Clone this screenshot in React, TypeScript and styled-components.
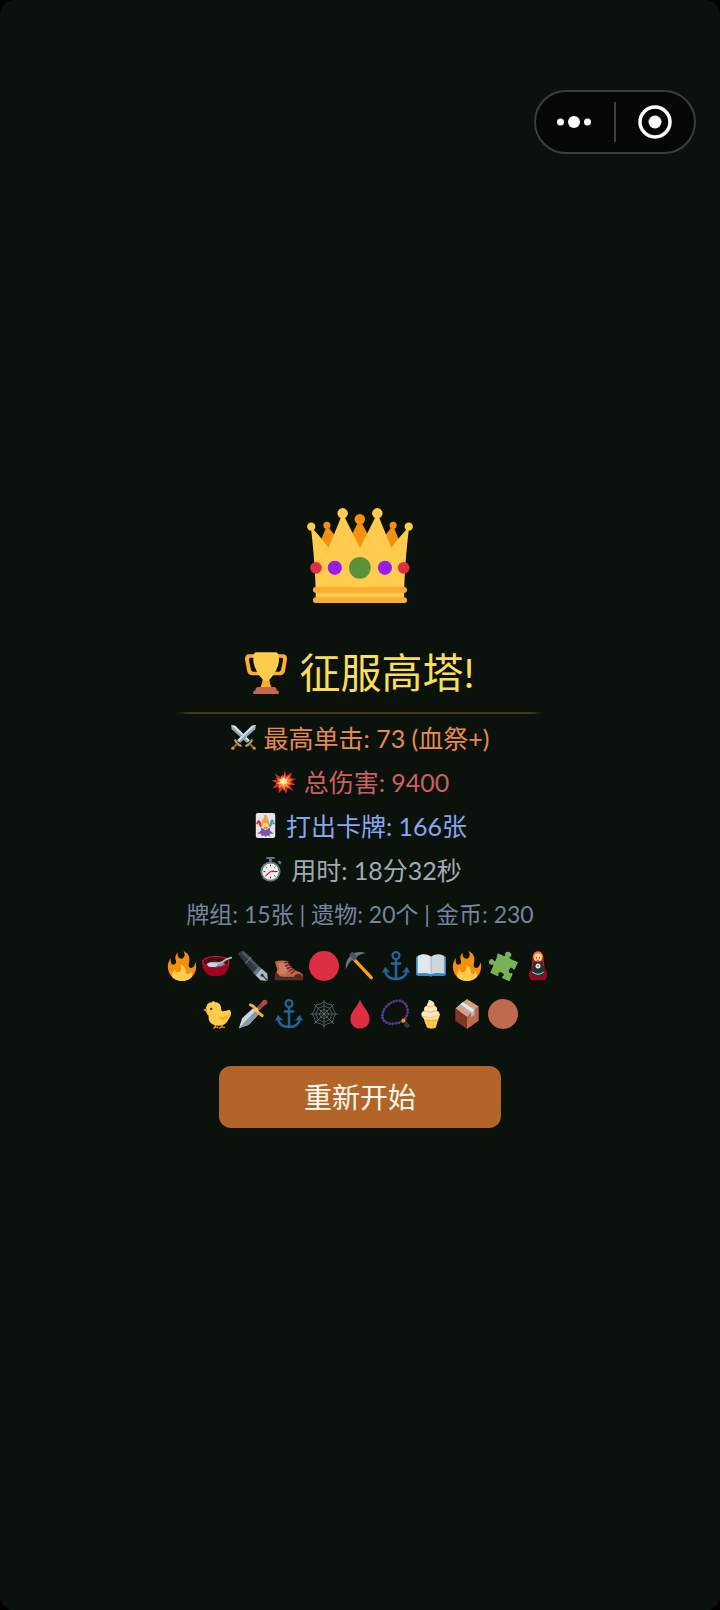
import React from 'react';
import styled, { createGlobalStyle } from 'styled-components';

const GlobalStyle = createGlobalStyle`
  *, *::before, *::after { box-sizing: border-box; }
  body {
    margin: 0;
    background: #000;
    font-family: Lato, "Noto Sans CJK SC", sans-serif;
  }
`;

const Screen = styled.div`
  position: relative;
  min-height: 100vh;
  display: flex;
  flex-direction: column;
  border-radius: 14px;
  background: #0b120c;
`;

const Capsule = styled.div`
  position: absolute;
  top: 90px;
  right: 24px;
  width: 162px;
  height: 64px;
  display: flex;
  align-items: center;
  border: 2px solid #3b3f3a;
  border-radius: 32px;
  background: #040805;
`;

const CapsuleButton = styled.button`
  flex: 1;
  height: 100%;
  display: flex;
  align-items: center;
  justify-content: center;
  padding: 0;
  border: 0;
  background: none;
  cursor: pointer;
`;

const CapsuleDivider = styled.span`
  width: 2px;
  height: 40px;
  background: #3b3f3a;
`;

const Result = styled.main`
  flex: 1;
  display: flex;
  flex-direction: column;
  align-items: center;
  justify-content: center;
  padding-top: 20px;
`;

const Icon = styled.svg<{ $size: number }>`
  display: block;
  flex: none;
  width: ${(p) => p.$size}px;
  height: ${(p) => p.$size}px;
`;

const Title = styled.h1`
  display: flex;
  align-items: center;
  gap: 12px;
  margin: 35px 0 0;
  color: #f9dd5b;
  font-size: 41px;
  font-weight: 400;
  line-height: 58px;
`;

const Divider = styled.hr`
  width: 51%;
  height: 2px;
  margin: 10px 0 2px;
  border: 0;
  border-radius: 1px;
  background: linear-gradient(90deg, transparent, #41391f 4%, #41391f 96%, transparent);
`;

const Stats = styled.ul`
  margin: 0;
  padding: 0;
  list-style: none;
`;

const Stat = styled.li<{ $color: string; $small?: boolean }>`
  display: flex;
  align-items: center;
  justify-content: center;
  gap: 8px;
  color: ${(p) => p.$color};
  font-size: ${(p) => (p.$small ? 23 : 25)}px;
  line-height: 44px;
  white-space: pre;
`;

const Relics = styled.ul`
  width: 392px;
  max-width: 100%;
  display: grid;
  grid-template-columns: repeat(11, 1fr);
  grid-auto-rows: 48px;
  place-items: center;
  margin: 6px 0 0;
  padding: 0;
  list-style: none;
`;

const Relic = styled.li`
  &:nth-child(12) { grid-column-start: 2; }
`;

const RestartButton = styled.button`
  width: 282px;
  height: 62px;
  margin-top: 28px;
  padding: 0 0 2px;
  border: 0;
  border-radius: 12px;
  background: #b36429;
  color: #fffaf0;
  font: inherit;
  font-size: 28px;
  cursor: pointer;
`;

const Emoji = ({ size, label, children }: { size: number; label: string; children: React.ReactNode }) => (
  <Icon $size={size} viewBox="0 0 36 36" role="img" aria-label={label}>{children}</Icon>
);

const crown = (
  <>
    <path fill="#F4900C" d="M14.174 17.075L6.75 7.594l-3.722 9.481z" />
    <path fill="#F4900C" d="M17.938 5.534l-6.563 12.389H24.5z" />
    <path fill="#F4900C" d="M21.826 17.075l7.424-9.481 3.722 9.481z" />
    <path fill="#FFCC4D" d="M28.669 15.19L23.887 3.523l-5.88 11.668-.007.003-.007-.004-5.88-11.668L7.331 15.19C4.197 10.833 1.28 8.042 1.28 8.042S3 20.75 3 33h30c0-12.25 1.72-24.958 1.72-24.958s-2.917 2.791-6.051 7.148z" />
    <circle fill="#5C913B" cx="17.957" cy="22" r="3.688" />
    <circle fill="#981CEB" cx="26.463" cy="22" r="2.412" />
    <circle fill="#DD2E44" cx="32.852" cy="22" r="1.986" />
    <circle fill="#981CEB" cx="9.45" cy="22" r="2.412" />
    <circle fill="#DD2E44" cx="3.061" cy="22" r="1.986" />
    <path fill="#FFAC33" d="M33 34H3c-.552 0-1-.447-1-1s.448-1 1-1h30c.553 0 1 .447 1 1s-.447 1-1 1zm0-3.486H3c-.552 0-1-.447-1-1s.448-1 1-1h30c.553 0 1 .447 1 1s-.447 1-1 1z" />
    <circle fill="#FFCC4D" cx="1.447" cy="8.042" r="1.407" />
    <circle fill="#F4900C" cx="6.75" cy="7.594" r="1.192" />
    <circle fill="#FFCC4D" cx="12.113" cy="3.523" r="1.784" />
    <circle fill="#FFCC4D" cx="34.553" cy="8.042" r="1.407" />
    <circle fill="#F4900C" cx="29.25" cy="7.594" r="1.192" />
    <circle fill="#FFCC4D" cx="23.887" cy="3.523" r="1.784" />
    <circle fill="#F4900C" cx="17.938" cy="5.534" r="1.784" />
  </>
);

const trophy = (
  <>
    <path fill="#FFAC33" d="M5.123 5h6C12.227 5 13 4.896 13 6V4c0-1.104-.773-2-1.877-2h-8c-2 0-3.583 2.125-3 5 0 0 1.791 9.375 1.917 9.958C2.373 18.5 4.164 20 6.081 20h6.958c1.105 0-.039-1.896-.039-3v-2c0 1.104-.773 2-1.877 2h-4c-1.104 0-1.833-1.042-2-2S3.539 7.667 3.539 7.667C3.206 5.75 4.018 5 5.123 5zm25.812 0h-6C23.831 5 22 4.896 22 6V4c0-1.104 1.831-2 2.935-2h8c2 0 3.584 2.125 3 5 0 0-1.633 9.419-1.771 10-.354 1.5-2.042 3-4 3h-7.146C21.914 20 22 18.104 22 17v-2c0 1.104 1.831 2 2.935 2h4c1.104 0 1.834-1.042 2-2s1.584-7.333 1.584-7.333C32.851 5.75 32.04 5 30.935 5zM20.832 22c0-6.958-2.709 0-2.709 0s-3-6.958-3 0-3.291 10-3.291 10h12.292c-.001 0-3.292-3.042-3.292-10z" />
    <path fill="#FFCC4D" d="M29.123 6.577c0 6.775-6.77 18.192-11 18.192-4.231 0-11-11.417-11-18.192 0-5.195 1-6.319 3-6.319 1.374 0 6.025-.027 8-.027l7-.001c2.917-.001 4 .684 4 6.347z" />
    <path fill="#C1694F" d="M27 33c0 1.104.227 2-.877 2h-16C9.018 35 9 34.104 9 33v-1c0-1.104 1.164-2 2.206-2h13.917c1.042 0 1.877.896 1.877 2v1z" />
    <path fill="#C1694F" d="M29 34.625c0 .76.165 1.375-1.252 1.375H8.498C7.206 36 7 35.385 7 34.625v-.25C7 33.615 7.738 33 8.498 33h19.25c.76 0 1.252.615 1.252 1.375v.25z" />
  </>
);

const swordHalf = (
  <>
    <path fill="#8FA5B5" d="M0 0l6 1 21 21-4 4L1 6z" />
    <path fill="#CFDFE9" d="M0 0l6 1 21 21-2 2z" />
    <path stroke="#BE9B5C" strokeWidth="3" strokeLinecap="round" d="M22 30c3-1 6-4 8-8" fill="none" />
    <path stroke="#A2603B" strokeWidth="3" d="M27 27l6 6" />
    <circle fill="#BE9B5C" cx="33.500" cy="33.500" r="2.300" />
  </>
);

const swords = (
  <>
    {swordHalf}
    <g transform="translate(36 0) scale(-1 1)">{swordHalf}</g>
  </>
);

const collision = (
  <>
    <path fill="#D92B2F" d="M20 1l2 9 8-5-2 8 8 1-7 4 6 5-8 0 5 9-8-5-2 9-4-8-7 7 0-9-9 2 6-7-7-5 9 0-5-10 9 6 2-4 2 2z" />
    <path fill="#F58A2C" d="M19 7l2 6 6-4-2 6 6 0-5 4 4 3-6 0 2 6-5-3-2 6-3-6-5 3 1-6-5-1 5-3-5-5 7 2 1-5 3 3z" />
    <path fill="#FFEDB8" d="M18 12l2 3 4-1-2 4 2 3-4 0-2 4-2-4-5 0 3-3-2-4 4 1z" />
  </>
);

const joker = (
  <>
    <rect fill="#E5E5EA" x="4" width="28" height="36" rx="3" />
    <path fill="#DB3145" d="M14 19l-4-8c-1-2-4-1-5 4 2-1 3-1 3 1l3 5z" />
    <path fill="#439DD5" d="M22 19l4-9c1-2 4-1 5 4-2-1-3 0-3 2l-3 5z" />
    <path fill="#F4A13C" d="M12 20l1-9 5-8 5 8 1 9z" />
    <circle fill="#DB8B32" cx="18" cy="4" r="1.500" />
    <circle fill="#FFD27D" cx="18" cy="19" r="4.500" />
    <path stroke="#A3262F" strokeWidth="1.300" d="M15.500 21q2.500 2 5 0" fill="none" />
    <path fill="#7D53AE" d="M12 21l6 4 6-4 1 5 5 4-6 0 0 4-4-2-2 3-2-3-4 2 0-4-6 0 5-4z" />
    <circle fill="#DB3145" cx="6" cy="15" r="1.300" />
    <circle fill="#DB3145" cx="30" cy="15" r="1.300" />
  </>
);

const stopwatch = (
  <>
    <path fill="#66757F" d="M12 0h12v3h-4v4h-4V3h-4zM28 7l3-2 3 3-2 3z" />
    <circle fill="#66757F" cx="18" cy="21" r="14.500" />
    <circle fill="#EBEFF2" cx="18" cy="21" r="11.800" />
    <path stroke="#292F33" strokeWidth="1.400" d="M18 11v2.500M18 28.500V31M8 21h2.500M25.500 21H28M11 14l1.500 1.500M25 14l-1.500 1.500M11 28l1.500-1.500M25 28l-1.500-1.500" />
    <path stroke="#292F33" strokeWidth="1.500" d="M18 21h8" />
    <path stroke="#DD2E44" strokeWidth="2" d="M11 27l7-6 5-1" fill="none" />
  </>
);

const fire = (
  <>
    <path fill="#F4900C" d="M35 19c0-2.062-.367-4.039-1.04-5.868-.46 5.389-3.333 8.157-6.335 6.868-2.812-1.208-.917-5.917-.777-8.164.236-3.809-.012-8.169-6.931-11.794 2.875 5.5.333 8.917-2.333 9.125-2.958.231-5.667-2.542-4.667-7.042-3.238 2.386-3.332 6.402-2.333 9 1.042 2.708-.042 4.958-2.583 5.208-2.84.28-4.418-3.041-2.963-8.333C2.52 10.965 1 14.805 1 19c0 9.389 7.611 17 17 17s17-7.611 17-17z" />
    <path fill="#FFCC4D" d="M28.394 23.999c.148 3.084-2.561 4.293-4.019 3.709-2.106-.843-1.541-2.291-2.083-5.291s-2.625-5.083-5.708-6c2.25 6.333-1.247 8.667-3.08 9.084-1.872.426-3.753-.001-3.968-4.007C7.352 23.668 6 26.676 6 30c0 .368.023.73.055 1.09C9.125 34.124 13.342 36 18 36s8.875-1.876 11.945-4.91c.032-.36.055-.722.055-1.09 0-2.187-.584-4.236-1.606-6.001z" />
  </>
);

const bowl = (
  <>
    <path fill="#A0041E" d="M0 13c0 10 6 17 13 17h6c8 0 14-7 14-17z" />
    <ellipse fill="#BE1931" cx="16.500" cy="13" rx="16.500" ry="7.200" />
    <ellipse fill="#4E0B16" cx="16.500" cy="13.200" rx="15" ry="6" />
    <path fill="#8899A6" d="M5 16c3-4 20-4 23 0-5 4-18 4-23 0z" />
    <path stroke="#AEBBC4" strokeWidth="2.200" strokeLinecap="round" d="M16 16l9-3 4-3 6-2" fill="none" />
    <ellipse fill="#CCD6DD" cx="12.500" cy="16.500" rx="6" ry="2.800" />
  </>
);

const pen = (
  <>
    <path fill="#31373D" d="M0 4c1-3 4-5 7-4l18 18-7 8z" />
    <path fill="#4B555D" d="M7 0l18 18-2.500 2.500L4 2z" />
    <path stroke="#8899A6" strokeWidth="1" d="M9 15l7-8" />
    <path fill="#66757F" d="M18 26l7-8 3 3-7 8z" />
    <path fill="#AEBBC4" d="M21 29l7-8 7 6 1 9-9-1z" />
    <path stroke="#31373D" strokeWidth="1.500" d="M29 29l7 7" />
    <circle fill="#31373D" cx="29" cy="29" r="1.800" />
  </>
);

const boot = (
  <>
    <path fill="#C1694F" d="M1 13c5-2 10-2 15-1 1 4 5 8 9 11 5 2 10 3 10 8v2H1l3-11z" />
    <path fill="#D58A6C" d="M4 15c3-1 7-1 10 0l2 8-3 5H5l2-7z" opacity=".6" />
    <path fill="#662113" d="M1 26c4 0 5 4 8 5h15c1-4 9-6 11 1v2H1z" />
    <path fill="#4B3230" d="M1 31h9l2 1h23v3H1z" />
    <path stroke="#702336" strokeWidth="1.700" strokeLinecap="round" d="M13 14l4-1M14 18l5-2M16 21l5-2M18 24l5-3M21 27l4-4" />
  </>
);

const pickaxe = (
  <>
    <path stroke="#F9A11B" strokeWidth="4" strokeLinecap="round" d="M9 8l22.500 24" />
    <path fill="#66757F" d="M1 22C0 13 4 7 8 5c4-4 11-5 17-2-6 0-9 2-12 5-6 3-9 7-12 14z" />
    <path fill="#495760" d="M5 4l4-3 6 6-4 5z" />
  </>
);

const anchor = (
  <g fill="none" stroke="#226699">
    <circle cx="18" cy="5.500" r="4.200" strokeWidth="2.600" />
    <path strokeWidth="3" d="M18 10v24" />
    <path strokeWidth="3" strokeLinecap="round" d="M13 15h10" />
    <path strokeWidth="3" d="M5 24c1 6 6 9.500 13 9.500S30 30 31 24" />
    <path fill="#226699" stroke="none" d="M1 26l4-7 6 7-5-1zM35 26l-4-7-6 7 5-1z" />
  </g>
);

const book = (
  <>
    <path fill="#3B88C3" d="M0 7h36v20c0 2-1 3-3 3H20l-2 1-2-1H3c-2 0-3-1-3-3z" />
    <path fill="#E1E8ED" d="M2 6c5-3 12-3 16 1v21c-4-2-11-2-16-1z" />
    <path fill="#CCD6DD" d="M34 6c-5-3-12-3-16 1v21c4-2 11-2 16-1z" />
    <path stroke="#99AAB5" strokeWidth="1" d="M18 7v20" />
  </>
);

const puzzle = (
  <path
    fill="#77B255"
    transform="translate(19 19) rotate(24) scale(1.200)"
    d="M-11-10h6c2 0 2-1 1-2-2-5 8-5 6 0-1 1-1 2 1 2h8v7c0 2-1 2-2 1-4-2-4 7 0 5 1-1 2-1 2 1v7H4c-2 0-2-1-1-2 2-4-7-4-5 0 1 1 1 2-1 2h-7V4c0-2-1-2-2-1-5 2-5-7 0-5 1 1 2 1 2-1z"
  />
);

const doll = (
  <>
    <path fill="#A0041E" d="M7 28c0-3 2-6 5-7h12c3 1 5 4 5 7 0 3-1 5-3 7H10c-2-2-3-4-3-7z" />
    <path fill="#BE1931" d="M11 12c0-7 2-12 7-12s7 5 7 12l1 10H10z" />
    <circle fill="#F4900C" cx="18" cy="6.500" r="5.800" />
    <circle fill="#FFDC9B" cx="18" cy="8" r="4.600" />
    <path fill="#292F33" d="M13 13h10l3 10c0 5-3 8-8 8s-8-3-8-8z" />
    <path stroke="#662113" strokeWidth="1.200" d="M16 7v2M20 7v2M16.500 11h3" />
    <circle fill="#E1E8ED" cx="18" cy="18" r="3" />
    <circle fill="#662113" cx="18" cy="18" r="1" />
    <path stroke="#CCD6DD" strokeWidth="1.200" d="M11 25q7 6 14 0" fill="none" />
  </>
);

const chick = (
  <>
    <path stroke="#E99A24" strokeWidth="1.600" strokeLinecap="round" d="M16 30v4M14 35l2-2 3 1M24 30v4M21 35l3-2 3 1" fill="none" />
    <path fill="#FFCC4D" d="M13 2l3 2c4 0 7 3 7 8 0 4 4 3 10 1 3 2 2 8-1 11-2 5-6 8-12 8-9 0-13-5-12-12C5 18 4 14 5 10c1-4 3-6 7-6z" />
    <path fill="#F4900C" d="M6 11l-5 2 5 3z" />
    <circle fill="#292F33" cx="11" cy="12" r="1.400" />
    <path fill="#FFAC33" d="M20 21c5 2 9 0 13-4-1 6-5 9-9 8-2 0-4-2-4-4z" />
  </>
);

const dagger = (
  <>
    <path fill="#CCD6DD" d="M1 35l4-12 13-12 7 7-12 13z" />
    <path fill="#8899A6" d="M1 35L21 14l4 4-12 13z" />
    <path stroke="#A0503C" strokeWidth="5" d="M24 12l8-8" />
    <path stroke="#7A3327" strokeWidth="1" d="M25 7l4 4M28 4l4 4" />
    <circle fill="#A0503C" cx="32" cy="4" r="3.200" />
    <path stroke="#F4B43C" strokeWidth="3.500" strokeLinecap="round" d="M15 7q4 1 7 6t7 7" fill="none" />
    <circle fill="#FFCC4D" cx="22" cy="13" r="2.500" />
  </>
);

const web = (
  <g fill="none" stroke="#66757F" strokeWidth=".9">
    <path d="M18 1v34M1 18h34M6 6l24 24M30 6L6 30" />
    <path d="M18 12.500q2 1 4 1.500.500 2 1.500 4-1 2-1.500 4-2 .500-4 1.500-2-1-4-1.500-.500-2-1.500-4 1-2 1.500-4 2-.500 4-1.500z" />
    <path d="M18 8q3 2 7 3 1 4 3 7-2 3-3 7-4 1-7 3-3-2-7-3-1-4-3-7 2-3 3-7 4-1 7-3z" />
    <path d="M18 3.500q4 3 10 4 1 6 4 10.500-3 4-4 10-6 1-10 4-4-3-10-4-1-6-4-10 3-4.500 4-10.500 6-1 10-4z" />
  </g>
);

const drop = <path fill="#DD2E44" d="M18 1c3 8 11.500 15 11.500 23 0 7-5 11.500-11.500 11.500S6.500 31 6.500 24C6.500 16 15 9 18 1z" />;

const beads = (
  <>
    <path stroke="#553986" strokeWidth="3.600" strokeLinecap="round" strokeDasharray="0 3.700" fill="none" d="M27 26c9-9 5-24-6-24C9 2 0 14 2 23c2 7 14 9 25 3" />
    <circle fill="#F4900C" cx="27" cy="26" r="2.500" />
    <path fill="#31373D" d="M28 28l3-1 4 5-3 3-4-2z" />
  </>
);

const iceCream = (
  <>
    <path fill="#FFCC4D" d="M9 22h19l-2 4-2 8c-1 2-9 2-11 0l-3-8z" />
    <path stroke="#F4A52C" strokeWidth="1" d="M10 26h17M15 27l1 7M21 27l-1 7" />
    <path fill="#FFE8B6" d="M15 1c5 1 8 3 7 7 3 1 4 3 3 6 4 1 5 7 1 9-4 2-13 2-17 0-4-3-3-8 1-9-1-3 0-5 3-6 0-3 3-4 2-7z" />
    <path stroke="#EFBD7B" strokeWidth="1.200" fill="none" d="M13 9q5 1 9-1M10 15q8 2 15-1M8 21q9 3 19-1" />
  </>
);

const box = (
  <>
    <path fill="#D99E82" d="M4 11L18 0l14 9-14 13z" />
    <path fill="#7E3828" d="M4 11l14 11v14L4 26z" />
    <path fill="#C1694F" d="M32 9L18 22v14l14-10z" />
    <path fill="#AEBBC4" d="M8 8l5-4 14 9v6l-4 3v-5z" />
    <path fill="#E1E8ED" d="M10 6l3-2 14 9-3 3z" />
  </>
);

const stats = [
  { label: '交叉的剑', icon: swords, color: '#e88a4c', text: '最高单击: 73 (血祭+)' },
  { label: '爆炸', icon: collision, color: '#cb615d', text: '总伤害: 9400' },
  { label: '小丑牌', icon: joker, color: '#88a6ed', text: '打出卡牌: 166张' },
  { label: '秒表', icon: stopwatch, color: '#a1aab4', text: '用时: 18分32秒' },
];

const relics = [
  { label: '火焰', icon: fire },
  { label: '汤碗', icon: bowl },
  { label: '钢笔', icon: pen },
  { label: '登山靴', icon: boot },
  { label: '红色圆球', icon: <circle fill="#DD2E44" cx="18" cy="18" r="18" /> },
  { label: '镐', icon: pickaxe },
  { label: '船锚', icon: anchor },
  { label: '打开的书', icon: book },
  { label: '火焰', icon: fire },
  { label: '拼图', icon: puzzle },
  { label: '套娃', icon: doll },
  { label: '小鸡', icon: chick },
  { label: '匕首', icon: dagger },
  { label: '船锚', icon: anchor },
  { label: '蛛网', icon: web },
  { label: '血滴', icon: drop },
  { label: '念珠', icon: beads },
  { label: '冰淇淋', icon: iceCream },
  { label: '包裹', icon: box },
  { label: '棕色圆球', icon: <circle fill="#C1694F" cx="18" cy="18" r="18" /> },
];

export default function App() {
  return (
    <Screen>
      <GlobalStyle />
      <Capsule>
        <CapsuleButton type="button" aria-label="更多">
          <svg width="36" height="14" viewBox="0 0 36 14" fill="#fff">
            <circle cx="3.500" cy="7" r="3.500" />
            <circle cx="17" cy="7" r="6" />
            <circle cx="30.500" cy="7" r="3.500" />
          </svg>
        </CapsuleButton>
        <CapsuleDivider />
        <CapsuleButton type="button" aria-label="关闭">
          <svg width="34" height="34" viewBox="0 0 34 34">
            <circle cx="17" cy="17" r="15" fill="none" stroke="#fff" strokeWidth="3.500" />
            <circle cx="17" cy="17" r="6.500" fill="#fff" />
          </svg>
        </CapsuleButton>
      </Capsule>
      <Result>
        <Emoji size={106} label="皇冠">{crown}</Emoji>
        <Title>
          <Emoji size={42} label="奖杯">{trophy}</Emoji>
          征服高塔!
        </Title>
        <Divider />
        <Stats>
          {stats.map((s) => (
            <Stat key={s.label} $color={s.color}>
              <Emoji size={25} label={s.label}>{s.icon}</Emoji>
              <span>{s.text}</span>
            </Stat>
          ))}
          <Stat $color="#7783a0" $small>牌组: 15张 | 遗物: 20个 | 金币: 230</Stat>
        </Stats>
        <Relics>
          {relics.map((r, i) => (
            <Relic key={i}>
              <Emoji size={30} label={r.label}>{r.icon}</Emoji>
            </Relic>
          ))}
        </Relics>
        <RestartButton type="button">重新开始</RestartButton>
      </Result>
    </Screen>
  );
}
